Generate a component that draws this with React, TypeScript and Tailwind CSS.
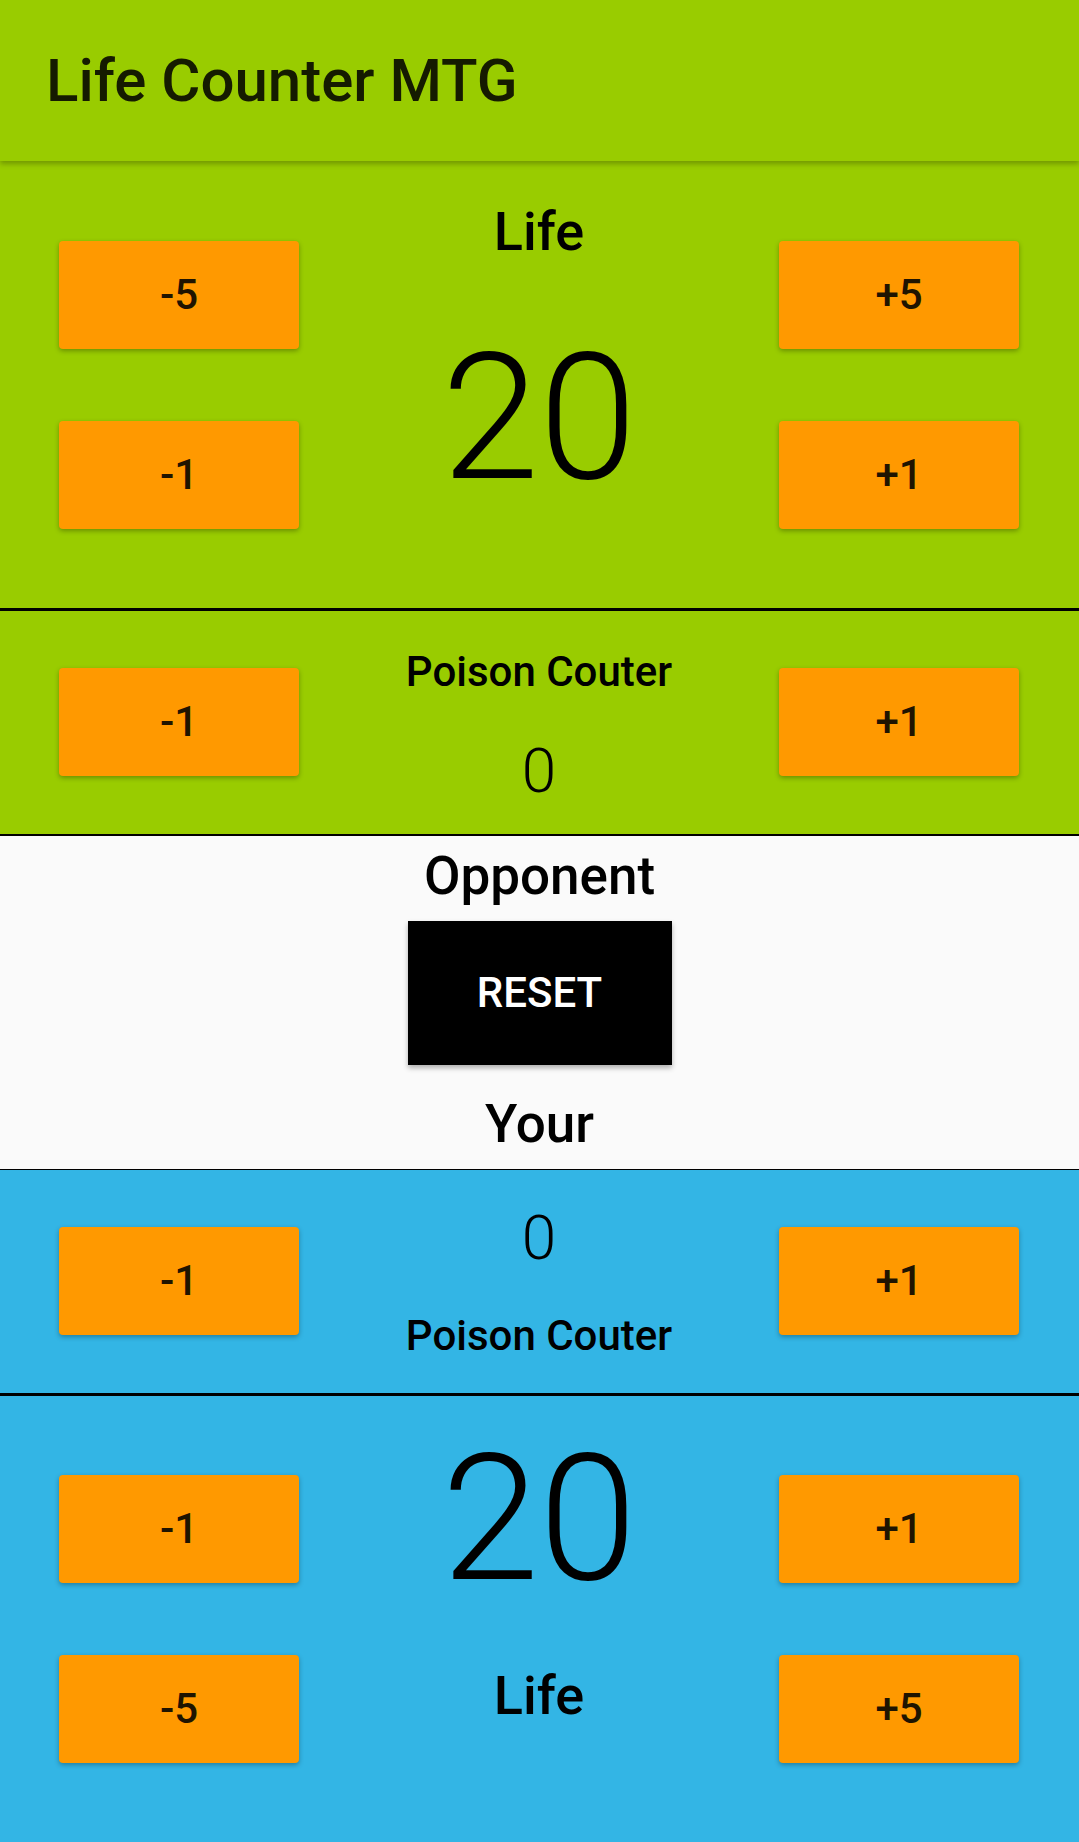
import React from "react";

const Btn = ({ label }: { label: string }) => (
  <div className="w-[240px] h-[108px] rounded-[4px] bg-[#ff9900] shadow-[0_2px_5px_rgba(0,0,0,0.3)] flex items-center justify-center text-[42px] leading-none font-medium text-[#1f1400]">
    {label}
  </div>
);

export default function App() {
  return (
    <div className="w-[1079px] h-[1842px] bg-[#fafafa] font-['Roboto'] overflow-hidden">
      <header className="relative z-10 h-[161px] bg-[#99cc00] shadow-[0_3px_5px_rgba(0,0,0,0.25)] flex items-center pl-[46px]">
        <h1 className="text-[60px] leading-none font-medium text-[#151b00]">Life Counter MTG</h1>
      </header>

      {/* Opponent life */}
      <section className="h-[450px] bg-[#99cc00] border-b-[3px] border-black flex pl-[59px] pr-[60px]">
        <div className="w-[240px] pt-[80px] flex flex-col gap-[72px]">
          <Btn label="-5" />
          <Btn label="-1" />
        </div>
        <div className="flex-1 flex flex-col items-center pt-[44px] text-black">
          <div className="text-[54px] leading-none font-medium">Life</div>
          <div className="mt-[71px] text-[176px] leading-none font-light">20</div>
        </div>
        <div className="w-[240px] pt-[80px] flex flex-col gap-[72px]">
          <Btn label="+5" />
          <Btn label="+1" />
        </div>
      </section>

      {/* Opponent poison */}
      <section className="h-[225px] bg-[#99cc00] border-b-[2px] border-black flex pl-[59px] pr-[60px]">
        <div className="w-[240px] pt-[57px]">
          <Btn label="-1" />
        </div>
        <div className="flex-1 flex flex-col items-center pt-[40px] text-black">
          <div className="text-[42px] leading-none font-medium">Poison Couter</div>
          <div className="mt-[47px] text-[62px] leading-none font-light">0</div>
        </div>
        <div className="w-[240px] pt-[57px]">
          <Btn label="+1" />
        </div>
      </section>

      {/* Middle */}
      <section className="h-[334px] bg-[#fafafa] border-b border-black flex flex-col items-center pt-[14px] text-black">
        <div className="text-[53px] leading-none font-medium">Opponent</div>
        <button className="mt-[18px] w-[264px] h-[144px] bg-black text-white text-[42px] leading-none font-medium shadow-[0_3px_5px_rgba(0,0,0,0.3)] flex items-center justify-center">
          RESET
        </button>
        <div className="mt-[33px] text-[53px] leading-none font-medium">Your</div>
      </section>

      {/* Your poison */}
      <section className="h-[226px] bg-[#33b5e5] border-b-[3px] border-black flex pl-[59px] pr-[60px]">
        <div className="w-[240px] pt-[57px]">
          <Btn label="-1" />
        </div>
        <div className="flex-1 flex flex-col items-center pt-[37px] text-black">
          <div className="text-[62px] leading-none font-light">0</div>
          <div className="mt-[46px] text-[42px] leading-none font-medium">Poison Couter</div>
        </div>
        <div className="w-[240px] pt-[57px]">
          <Btn label="+1" />
        </div>
      </section>

      {/* Your life */}
      <section className="h-[446px] bg-[#33b5e5] flex pl-[59px] pr-[60px]">
        <div className="w-[240px] pt-[79px] flex flex-col gap-[72px]">
          <Btn label="-1" />
          <Btn label="-5" />
        </div>
        <div className="flex-1 flex flex-col items-center pt-[35px] text-black">
          <div className="text-[176px] leading-none font-light">20</div>
          <div className="mt-[62px] text-[54px] leading-none font-medium">Life</div>
        </div>
        <div className="w-[240px] pt-[79px] flex flex-col gap-[72px]">
          <Btn label="+1" />
          <Btn label="+5" />
        </div>
      </section>
    </div>
  );
}
